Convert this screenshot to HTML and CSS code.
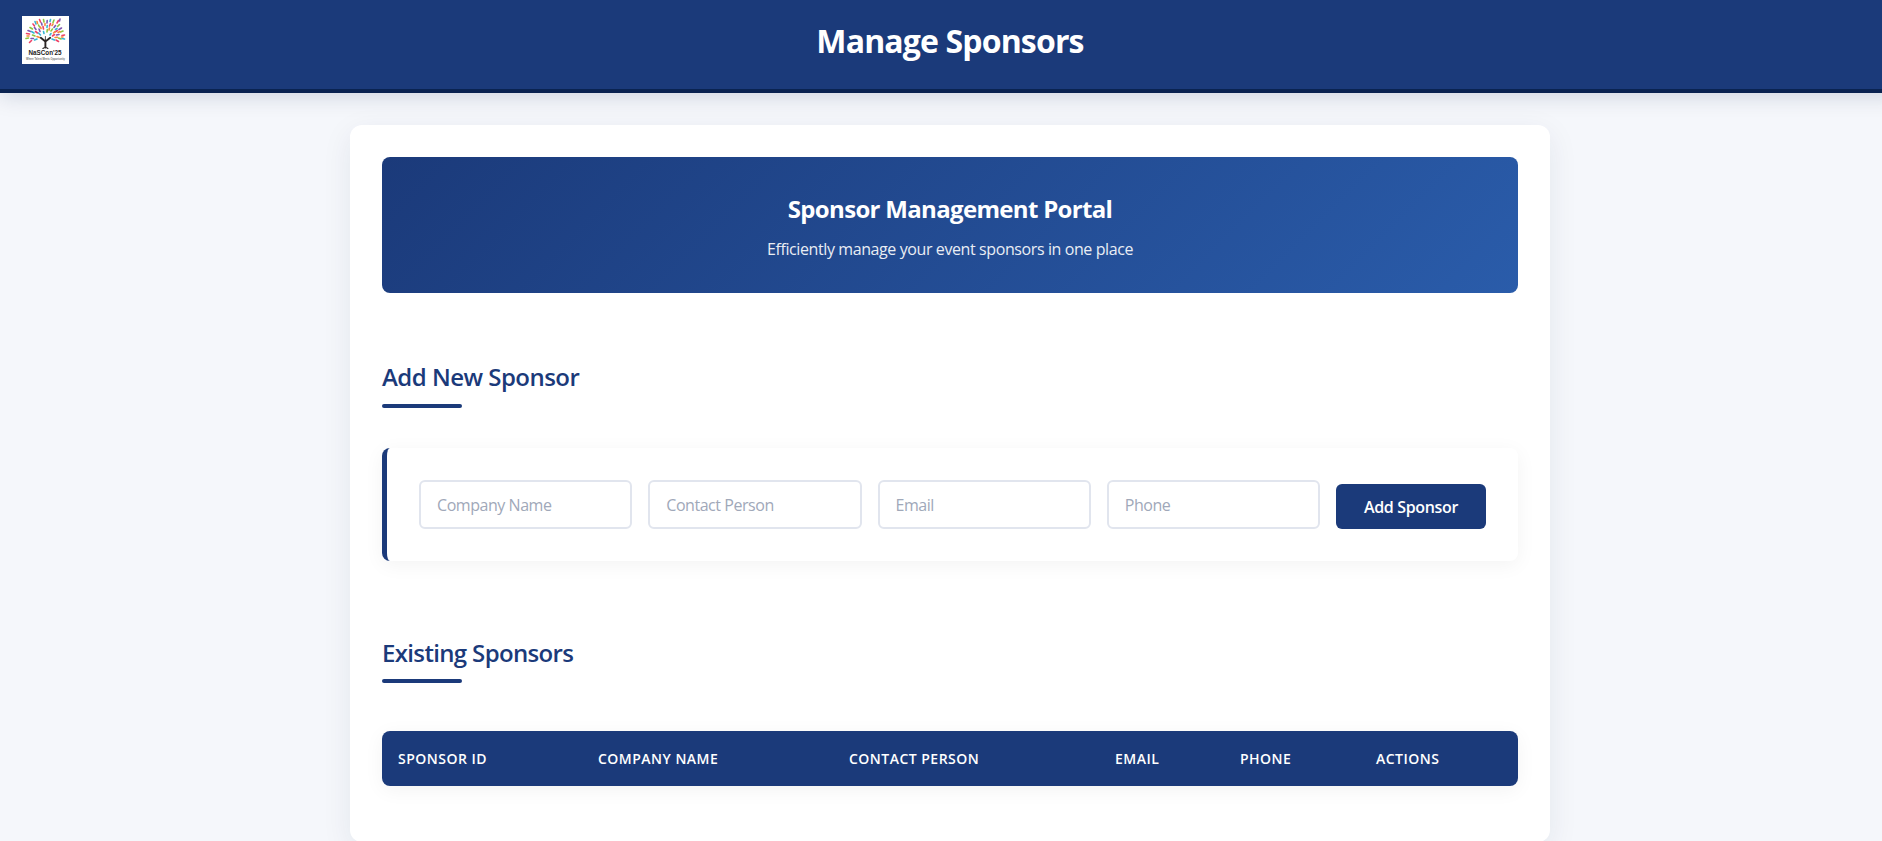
FILE: index.html
```html
<!DOCTYPE html>
<html lang="en">
<head>
<meta charset="utf-8">
<title>Manage Sponsors</title>
<link rel="stylesheet" href="styles.css">
</head>
<body>
<header class="header">
  <svg class="logo" viewBox="0 0 47 48" width="47" height="48">
    <rect width="47" height="48" fill="#fff"/>
    <g class="leaves">
      <path class="leaf-pink" d="M18.500 6L17.500 3.500M27.500 10L28.500 7.500M12.500 10L11 8M33 16L35.500 14.500M7.500 18L4.500 17.500M15.500 17L13.500 15.500M40 19.500L42.500 19M9.500 24.500L7.500 26.500M21.500 13L21 10.500M30.500 20L32.500 18.500M34 24L36.500 25.500M35 7L36.500 4.500"/>
      <path class="leaf-green" d="M22 6L21.500 3.500M31 6.500L32 4M10.500 13L8 11.500M17.500 11L16.500 9M25 16L25.300 13.500M35.500 10.500L37.500 8.500M38.500 16L41 15M13 20L10.500 19M6.500 22L4 22.500M29 15L30.500 13M36.500 22L39 23"/>
      <path class="leaf-purple" d="M25 7L25.200 4.500M37 13.500L39.500 12M14 13.500L12.500 11.500M8.500 15.500L6 14.500M20 9L19.500 7M32 11.500L33.500 9.500M34.500 19L37 18.500M11.500 22.500L9 22.500M18 15.500L17 13M37.500 5L38 3"/>
      <path class="leaf-cyan" d="M28 5.500L28.500 3.500M18.500 19L16.500 17M33.500 13.500L35 12.500M12 17L9.500 15.500M25 11.500L25.200 9.500M40 22.500L42.500 23M15 23L12.500 24M22 17.500L21.500 15.500M30 23L32.500 24M14 8L13 5.500M28 19L29 17.500"/>
      <path class="leaf-orange" d="M30 9.500L31 8M23 9.500L23 7.500M17.500 21.500L15 20.500M36 16.500L38 15.500M7 20L5 20M15.500 7.500L15 5.500M31.500 17L33 15.500M39.500 21L41 21M33 21.500L35.500 21.300M27 14L27.500 12M19 12.500L18.500 11"/>
    </g>
    <g fill="none" stroke="#2b2523" stroke-linecap="round">
      <path d="M23.400 31.500V24.500M23.400 25.500L18.800 21.800M23.400 25.500L28.200 21.800" stroke-width="1.900"/>
      <path d="M23.400 24V20.500" stroke-width="0.800"/>
      <path d="M20.900 32.500Q23.400 30.500 25.900 32.500" stroke-width="1.100"/>
    </g>
    <text class="logo-name" x="6.500" y="39" textLength="33" lengthAdjust="spacingAndGlyphs">NaSCon'25</text>
    <text class="logo-tag" x="4" y="43.500" textLength="39" lengthAdjust="spacingAndGlyphs">Where Talent Meets Opportunity</text>
  </svg>
  <h1 class="header-title">Manage Sponsors</h1>
</header>
<main class="container">
  <section class="banner">
    <h2 class="banner-title">Sponsor Management Portal</h2>
    <p class="banner-text">Efficiently manage your event sponsors in one place</p>
  </section>
  <h2 class="section-title section-add">Add New Sponsor</h2>
  <form class="sponsor-form">
    <input class="field" type="text" placeholder="Company Name">
    <input class="field" type="text" placeholder="Contact Person">
    <input class="field" type="email" placeholder="Email">
    <input class="field" type="text" placeholder="Phone">
    <button class="submit" type="button">Add Sponsor</button>
  </form>
  <h2 class="section-title section-list">Existing Sponsors</h2>
  <div class="table">
    <div class="th">Sponsor ID</div>
    <div class="th">Company Name</div>
    <div class="th">Contact Person</div>
    <div class="th">Email</div>
    <div class="th">Phone</div>
    <div class="th">Actions</div>
  </div>
</main>
</body>
</html>
```
FILE: styles.css
```css
* { box-sizing: border-box; margin: 0; padding: 0; }
html { overflow: hidden; background: #f5f7fb; }
body {
  width: 1900px;
  font-family: "Segoe UI", "Open Sans", "Noto Sans", sans-serif;
  color: #1b3a7a;
}
.header {
  display: grid;
  grid-template-columns: 47px 1fr 47px;
  height: 93px;
  padding: 16px 22px 0;
  background: #1b3a7a;
  border-bottom: 4px solid #0a2351;
  box-shadow: 0 4px 20px rgba(10, 35, 81, 0.15);
}
.logo { display: block; }
.logo-name { font: 700 6.500px "Liberation Sans", sans-serif; fill: #222; }
.logo-tag { font: 700 2.600px "Liberation Sans", sans-serif; fill: #777; }
.leaves { fill: none; stroke-width: 1.600px; stroke-linecap: round; }
.leaf-pink { stroke: #ee4266; }
.leaf-green { stroke: #8cc63f; }
.leaf-purple { stroke: #7e57b2; }
.leaf-cyan { stroke: #35b5d4; }
.leaf-orange { stroke: #f58a3c; }
.header-title {
  margin-top: 3px;
  text-align: center;
  color: #fff;
  font-size: 32px;
  font-weight: 700;
  line-height: 44px;
  letter-spacing: -0.850px;
}
.container {
  width: 1200px;
  height: 717px;
  margin: 32px auto 0;
  padding: 32px;
  background: #fff;
  border-radius: 12px;
  box-shadow: 0 8px 30px rgba(10, 35, 81, 0.08);
}
.banner {
  height: 136px;
  padding-top: 35px;
  text-align: center;
  color: #fff;
  border-radius: 8px;
  background: linear-gradient(135deg, #1b3a7a 0%, #2a5caa 100%);
}
.banner-title { font-size: 24px; font-weight: 700; line-height: 33px; letter-spacing: -0.680px; }
.banner-text { margin-top: 13px; font-size: 16px; line-height: 22px; letter-spacing: -0.400px; opacity: 0.9; }
.section-title {
  font-size: 24px;
  font-weight: 600;
  line-height: 34px;
}
.section-title::after {
  content: "";
  display: block;
  width: 80px;
  height: 4px;
  margin-top: 9px;
  border-radius: 2px;
  background: #1b3a7a;
}
.section-add { margin-top: 67px; letter-spacing: -0.520px; }
.section-add::after { margin-top: 10px; }
.section-list { margin-top: 75px; letter-spacing: -0.650px; }
.sponsor-form {
  display: grid;
  grid-template-columns: repeat(4, 1fr) 150px;
  gap: 16px;
  align-items: end;
  height: 113px;
  margin-top: 40px;
  padding: 32px;
  border-left: 5px solid #1b3a7a;
  border-radius: 8px;
  background: #fff;
  box-shadow: 0 4px 20px rgba(0, 0, 0, 0.05);
}
.field {
  width: 100%;
  height: 49px;
  padding: 0 16px;
  border: 2px solid #e1e5ee;
  border-radius: 6px;
  background: #fff;
  font: 400 16px "Segoe UI", "Open Sans", "Noto Sans", sans-serif;
  letter-spacing: -0.450px;
}
.field::placeholder { color: #a0a8b9; }
.submit {
  height: 45px;
  border: 0;
  border-radius: 6px;
  background: #1b3a7a;
  color: #fff;
  font: 600 16px "Segoe UI", "Open Sans", "Noto Sans", sans-serif;
  letter-spacing: -0.330px;
}
.table {
  display: grid;
  grid-template-columns: 200px 251px 266px 125px 136px 1fr;
  align-items: center;
  height: 55px;
  margin-top: 48px;
  border-radius: 8px;
  background: #1b3a7a;
  color: #fff;
  box-shadow: 0 4px 20px rgba(0, 0, 0, 0.05);
}
.th {
  padding-left: 16px;
  font-size: 14px;
  font-weight: 600;
  letter-spacing: 0.480px;
  text-transform: uppercase;
}
```
